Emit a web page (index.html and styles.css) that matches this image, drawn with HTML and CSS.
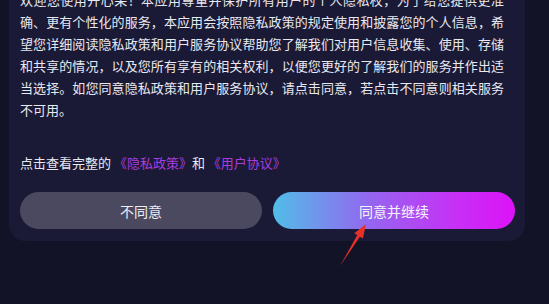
FILE: index.html
```html
<!DOCTYPE html>
<html lang="zh-CN">
<head>
<meta charset="utf-8">
<link rel="stylesheet" href="styles.css">
</head>
<body>
<div class="card">
  <p class="policy">欢迎您使用开心果！本应用尊重并保护所有用户的个人隐私权，为了给您提供更准确、更有个性化的服务，本应用会按照隐私政策的规定使用和披露您的个人信息，希望您详细阅读隐私政策和用户服务协议帮助您了解我们对用户信息收集、使用、存储和共享的情况，以及您所有享有的相关权利，以便您更好的了解我们的服务并作出适当选择。如您同意隐私政策和用户服务协议，请点击同意，若点击不同意则相关服务不可用。</p>
  <p class="links">点击查看完整的 <span class="link">《隐私政策》</span>和 <span class="link">《用户协议》</span></p>
  <div class="actions">
    <button class="btn btn-decline">不同意</button>
    <button class="btn btn-accept">同意并继续</button>
  </div>
</div>
<svg class="arrow" width="45" height="60" viewBox="0 0 45 60">
  <polygon points="36,9 32.9,23.5 29.9,21.7 10,51 27.3,20.1 24.3,18.3" fill="#e8302a"/>
</svg>
</body>
</html>
```
FILE: styles.css
```css
html, body {
  margin: 0;
  padding: 0;
}
body {
  background: #131327;
  width: 549px;
  height: 304px;
  overflow: hidden;
  position: relative;
  font-family: "Noto Sans CJK SC", "Noto Sans", sans-serif;
  color: #e8e8f0;
}
.card {
  margin: -11px 0 0 9px;
  width: 516px;
  box-sizing: border-box;
  padding: 0 10px 12px 11px;
  background: #1a1a36;
  border-radius: 0 0 16px 16px;
}
.policy {
  margin: 0 11px 0 0;
  font-size: 13px;
  line-height: 22px;
  text-align: justify;
}
.links {
  margin: 31px 0 0 0;
  font-size: 13px;
  line-height: 22px;
}
.link {
  color: #a93ddc;
}
.actions {
  display: flex;
  gap: 11px;
  margin-top: 18px;
}
.btn {
  flex: 0 0 242px;
  height: 37px;
  border: none;
  border-radius: 19px;
  font-family: inherit;
  font-size: 14px;
  color: #ececf4;
  padding: 0;
}
.btn-decline {
  background: #4a4960;
}
.btn-accept {
  background: linear-gradient(90deg, #51bde8 0%, #9466f0 40%, #c631f5 75%, #dd12f8 100%);
  color: #f4f4fa;
}
.arrow {
  position: absolute;
  left: 330px;
  top: 215px;
}
```
